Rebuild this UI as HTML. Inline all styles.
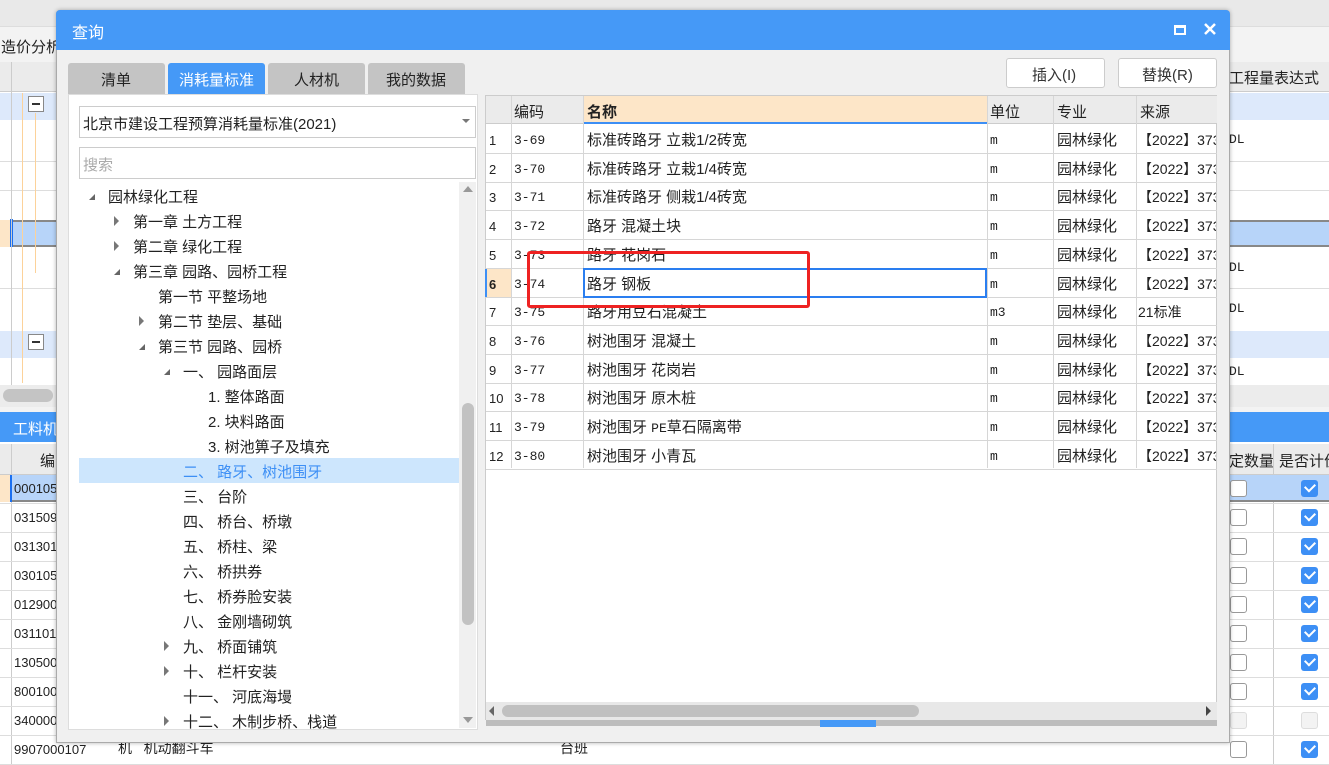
<!DOCTYPE html>
<html><head><meta charset="utf-8"><style>
*{box-sizing:border-box;margin:0;padding:0}
body{width:1329px;height:765px;position:relative;overflow:hidden;background:#fff;font-family:"Liberation Sans","Noto Sans CJK SC",sans-serif;font-size:14px;color:#222}
.a{position:absolute}
.t{position:absolute;white-space:nowrap}
.mono{font-family:"Liberation Mono","Noto Sans CJK SC",monospace;font-size:13px}
.cb{position:absolute;width:17px;height:17px;border-radius:3px;background:#3d8ff5}
.cb:after{content:"";position:absolute;left:4px;top:3px;width:8px;height:5px;border-left:2px solid #fff;border-bottom:2px solid #fff;transform:rotate(-45deg)}
.cw{position:absolute;width:17px;height:17px;border:1px solid #999;border-radius:3px;background:#fff}
</style></head><body>
<div class="a" style="left:0;top:0;width:1329px;height:27px;background:#e9e9e9;border-bottom:1px solid #ddd"></div>
<div class="a" style="left:0;top:27px;width:1329px;height:35px;background:#f3f3f3"></div>
<div class="t" style="left:1px;top:36px;font-size:15px">造价分析</div>
<div class="a" style="left:0;top:62px;width:1329px;height:30px;background:#ebebeb;border-bottom:1px solid #ccc"></div>
<div class="t" style="left:1229px;top:67px;font-size:15px">工程量表达式</div>
<div class="a" style="left:0;top:93px;width:1329px;height:27px;background:#dde9fb"></div>
<div class="a" style="left:0;top:220px;width:1329px;height:27px;background:#b7d4f9;border-top:2px solid #888;border-bottom:2px solid #888"></div>
<div class="a" style="left:0;top:220px;width:11px;height:27px;background:#fde6c8"></div>
<div class="a" style="left:10px;top:219px;width:3px;height:28px;background:#1a6ff0"></div>
<div class="a" style="left:0;top:331px;width:1329px;height:27px;background:#dde9fb"></div>
<div class="a" style="left:0;top:161px;width:1329px;height:1px;background:#ddd"></div>
<div class="a" style="left:0;top:190px;width:1329px;height:1px;background:#ddd"></div>
<div class="a" style="left:0;top:288px;width:1329px;height:1px;background:#ddd"></div>
<div class="a" style="left:0;top:385px;width:1329px;height:22px;background:#ececec"></div>
<div class="a" style="left:3px;top:389px;width:50px;height:13px;border-radius:7px;background:#c4c4c4"></div>
<div class="a" style="left:11px;top:62px;width:1px;height:323px;background:#ccc"></div>
<div class="a" style="left:22px;top:93px;width:1px;height:290px;background:#fcd29a"></div>
<div class="a" style="left:35px;top:113px;width:1px;height:160px;background:#fcd29a"></div>
<div class="a" style="left:28px;top:96px;width:16px;height:16px;border:1px solid #888;background:#fff"></div>
<div class="a" style="left:32px;top:103px;width:8px;height:2px;background:#333"></div>
<div class="a" style="left:28px;top:334px;width:16px;height:16px;border:1px solid #888;background:#fff"></div>
<div class="a" style="left:32px;top:341px;width:8px;height:2px;background:#333"></div>
<div class="t mono" style="left:1229px;top:132px">DL</div>
<div class="t mono" style="left:1229px;top:260px">DL</div>
<div class="t mono" style="left:1229px;top:301px">DL</div>
<div class="t mono" style="left:1229px;top:364px">DL</div>
<div class="a" style="left:0;top:407px;width:1329px;height:5px;background:#f3f3f3"></div>
<div class="a" style="left:0;top:412px;width:1329px;height:30px;background:#4599f7"></div>
<div class="t" style="left:13px;top:418px;color:#fff;font-size:15px">工料机</div>
<div class="a" style="left:0;top:444px;width:1329px;height:31px;background:#ebebeb;border-bottom:1px solid #ccc"></div>
<div class="t" style="left:40px;top:450px;font-size:15px">编</div>
<div class="t" style="left:1229px;top:450px;font-size:15px">定数量</div>
<div class="t" style="left:1279px;top:450px;font-size:15px">是否计价</div>
<div class="a" style="left:1273px;top:444px;width:1px;height:321px;background:#ccc"></div>
<div class="a" style="left:11px;top:444px;width:1px;height:321px;background:#ccc"></div>
<div class="a" style="left:0;top:475px;width:1329px;height:27px;background:#b7d4f9;border-bottom:2px solid #888"></div>
<div class="a" style="left:0;top:475px;width:10px;height:27px;background:#fde6c8"></div>
<div class="a" style="left:10px;top:475px;width:2px;height:27px;background:#1a6ff0"></div>
<div id="bgrows"></div>
<div class="a" style="left:56px;top:10px;width:1174px;height:733px;background:#f0f0f0;border:1px solid #aaa;border-radius:4px 4px 0 0;box-shadow:0 0 4px rgba(0,0,0,.3)"></div>
<div class="a" style="left:56px;top:10px;width:1174px;height:40px;background:#4599f7;border-radius:4px 4px 0 0"></div>
<div class="t" style="left:72px;top:19px;color:#fff;font-size:16px">查询</div>
<div class="a" style="left:1174px;top:25px;width:12px;height:10px;border:2px solid #fff;border-top-width:3px"></div>
<svg class="a" style="left:1203px;top:22px" width="14" height="14"><path d="M2 2L12 12M12 2L2 12" stroke="#fff" stroke-width="2.5"/></svg>
<div class="a" style="left:68px;top:63px;width:97px;height:31px;background:#c4c4c4;border-radius:3px 3px 0 0"></div>
<div class="t" style="left:101px;top:69px;font-size:15px">清单</div>
<div class="a" style="left:168px;top:63px;width:97px;height:31px;background:#4599f7;border-radius:3px 3px 0 0"></div>
<div class="t" style="left:179px;top:69px;font-size:15px;color:#fff">消耗量标准</div>
<div class="a" style="left:268px;top:63px;width:97px;height:31px;background:#c4c4c4;border-radius:3px 3px 0 0"></div>
<div class="t" style="left:294px;top:69px;font-size:15px">人材机</div>
<div class="a" style="left:368px;top:63px;width:97px;height:31px;background:#c4c4c4;border-radius:3px 3px 0 0"></div>
<div class="t" style="left:386px;top:69px;font-size:15px">我的数据</div>
<div class="a" style="left:1006px;top:58px;width:99px;height:30px;background:#fff;border:1px solid #ccc;border-radius:3px"></div>
<div class="t" style="left:1032px;top:64px;font-size:15px;color:#333">插入(I)</div>
<div class="a" style="left:1118px;top:58px;width:99px;height:30px;background:#fff;border:1px solid #ccc;border-radius:3px"></div>
<div class="t" style="left:1142px;top:64px;font-size:15px;color:#333">替换(R)</div>
<div class="a" style="left:68px;top:94px;width:410px;height:636px;background:#fff;border:1px solid #ddd"></div>
<div class="a" style="left:79px;top:106px;width:397px;height:32px;border:1px solid #ccc;background:#fff"></div>
<div class="t" style="left:83px;top:113px;font-size:15px">北京市建设工程预算消耗量标准(2021)</div>
<svg class="a" style="left:462px;top:119px" width="8" height="5"><path d="M0 0H8L4 4Z" fill="#777"/></svg>
<div class="a" style="left:79px;top:147px;width:397px;height:32px;border:1px solid #ccc;background:#fff"></div>
<div class="t" style="left:83px;top:154px;font-size:15px;color:#aaa">搜索</div>
<div class="a" style="left:459px;top:182px;width:17px;height:546px;background:#f0f0f0"></div>
<div class="a" style="left:462px;top:403px;width:12px;height:222px;border-radius:6px;background:#c2c2c2"></div>
<svg class="a" style="left:462px;top:185px" width="12" height="8"><path d="M1 7H11L6 1Z" fill="#999"/></svg>
<svg class="a" style="left:462px;top:716px" width="12" height="8"><path d="M1 1H11L6 7Z" fill="#999"/></svg>
<div class="a" style="left:79px;top:458px;width:380px;height:25px;background:#cde6fd"></div>
<div id="tree"></div>
<div class="a" style="left:485px;top:95px;width:732px;height:625px;background:#fff;border:1px solid #ccc"></div>
<div class="a" style="left:486px;top:96px;width:731px;height:28px;background:#ebebeb;border-bottom:1px solid #ccc"></div>
<div class="a" style="left:583px;top:96px;width:404px;height:28px;background:#fde6c8;border-bottom:2px solid #3d8ff5"></div>
<div id="tbl"></div>
<div class="a" style="left:486px;top:702px;width:731px;height:18px;background:#e8e8e8"></div>
<div class="a" style="left:502px;top:705px;width:417px;height:12px;border-radius:6px;background:#c0c0c0"></div>
<svg class="a" style="left:489px;top:705px" width="6" height="12"><path d="M5 1V11L0 6Z" fill="#666"/></svg>
<svg class="a" style="left:1206px;top:705px" width="6" height="12"><path d="M0 1V11L5 6Z" fill="#444"/></svg>
<div class="a" style="left:486px;top:720px;width:731px;height:6px;background:#bdbdbd"></div>
<div class="a" style="left:820px;top:720px;width:56px;height:7px;background:#4599f7"></div>
<div class="a" style="left:527px;top:251px;width:283px;height:57px;border:3px solid #ee2222;border-radius:3px"></div>
<script>
var tr=[[0,1,"园林绿化工程"],[1,2,"第一章 土方工程"],[1,2,"第二章 绿化工程"],[1,1,"第三章 园路、园桥工程"],[2,0,"第一节 平整场地"],[2,2,"第二节 垫层、基础"],[2,1,"第三节 园路、园桥"],[3,1,"一、 园路面层"],[4,0,"1. 整体路面"],[4,0,"2. 块料路面"],[4,0,"3. 树池箅子及填充"],[3,0,"二、 路牙、树池围牙"],[3,0,"三、 台阶"],[3,0,"四、 桥台、桥墩"],[3,0,"五、 桥柱、梁"],[3,0,"六、 桥拱券"],[3,0,"七、 桥券脸安装"],[3,0,"八、 金刚墙砌筑"],[3,2,"九、 桥面铺筑"],[3,2,"十、 栏杆安装"],[3,0,"十一、 河底海墁"],[3,2,"十二、 木制步桥、栈道"]];
var h="";tr.forEach(function(r,i){var y=186+i*25,x=108+r[0]*25;var c=i==11?"#3d8ff5":"#222";
if(r[1]==1)h+='<svg class="a" style="left:'+(x-20)+'px;top:'+(y+7)+'px" width="8" height="8"><path d="M7 1V7H1Z" fill="#666"/></svg>';
if(r[1]==2)h+='<svg class="a" style="left:'+(x-19)+'px;top:'+(y+5)+'px" width="6" height="10"><path d="M0 0V10L5 5Z" fill="#777"/></svg>';
h+='<div class="t" style="left:'+x+'px;top:'+y+'px;font-size:15px;color:'+c+';height:22px;overflow:hidden">'+r[2]+'</div>';});
document.getElementById("tree").innerHTML=h;
var rows=[["3-69","标准砖路牙 立栽1/2砖宽"],["3-70","标准砖路牙 立栽1/4砖宽"],["3-71","标准砖路牙 侧栽1/4砖宽"],["3-72","路牙 混凝土块"],["3-73","路牙 花岗石"],["3-74","路牙 钢板"],["3-75","路牙用豆石混凝土"],["3-76","树池围牙 混凝土"],["3-77","树池围牙 花岗岩"],["3-78","树池围牙 原木桩"],["3-79","树池围牙 PE草石隔离带"],["3-80","树池围牙 小青瓦"]];
h='<div class="t" style="left:514px;top:101px;font-size:15px">编码</div><div class="t" style="left:587px;top:101px;font-size:15px;font-weight:bold">名称</div><div class="t" style="left:990px;top:101px;font-size:15px">单位</div><div class="t" style="left:1057px;top:101px;font-size:15px">专业</div><div class="t" style="left:1140px;top:101px;font-size:15px">来源</div>';
[511,583,987,1053,1136].forEach(function(x){h+='<div class="a" style="left:'+x+'px;top:96px;width:1px;height:372px;background:#d6d6d6"></div>'});
rows.forEach(function(r,i){var y=125+i*28.7;
h+='<div class="a" style="left:486px;top:'+(y+28)+'px;width:731px;height:1px;background:#d6d6d6"></div>';
if(i==5){h+='<div class="a" style="left:486px;top:'+y+'px;width:25px;height:28px;background:#fde6c8"></div><div class="a" style="left:485px;top:'+y+'px;width:2px;height:28px;background:#3d8ff5"></div><div class="a" style="left:583px;top:'+(y-1)+'px;width:404px;height:30px;border:2px solid #2a7ef0"></div>';}
h+='<div class="t" style="left:489px;top:'+(y+8)+'px;font-size:13px;'+(i==5?'font-weight:bold':'')+'">'+(i+1)+'</div>';
h+='<div class="t mono" style="left:514px;top:'+(y+8)+'px">'+r[0]+'</div>';
h+='<div class="t" style="left:587px;top:'+(y+4)+'px;font-size:15px">'+r[1].replace("PE",'<span class="mono">PE</span>')+'</div>';
h+='<div class="t mono" style="left:990px;top:'+(y+8)+'px">'+(i==6?"m3":"m")+'</div>';
h+='<div class="t" style="left:1057px;top:'+(y+4)+'px;font-size:15px">园林绿化</div>';
h+='<div class="t" style="left:1138px;top:'+(y+5)+'px;font-size:14px;width:78px;overflow:hidden">'+(i==6?"21标准":"【2022】373")+'</div>';});
document.getElementById("tbl").innerHTML=h;
var codes=["000105","031509","031301","030105","012900","031101","130500","800100","340000","9907000107"];
h="";codes.forEach(function(c,i){var y=475+i*29;
h+='<div class="a" style="left:0;top:'+(y+28)+'px;width:1329px;height:1px;background:#ddd"></div>';
h+='<div class="t" style="left:14px;top:'+(y+6)+'px;font-size:13px">'+c+'</div>';
h+='<div class="cw" style="left:1230px;top:'+(y+5)+'px'+(i==8?';border-color:#ddd;background:#f3f3f3':'')+'"></div>';
if(i==8)h+='<div class="cw" style="left:1301px;top:'+(y+5)+'px;border-color:#ddd;background:#f3f3f3"></div>';else h+='<div class="cb" style="left:1301px;top:'+(y+5)+'px"></div>';});
h+='<div class="t" style="left:118px;top:738px;font-size:14px">机 &nbsp; 机动翻斗车</div><div class="t" style="left:560px;top:738px">台班</div>';
document.getElementById("bgrows").innerHTML=h;
</script>
</body></html>
